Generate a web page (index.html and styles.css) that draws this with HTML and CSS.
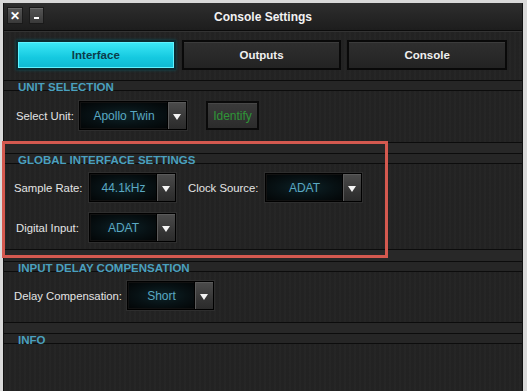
FILE: index.html
```html
<!DOCTYPE html>
<html>
<head>
<meta charset="utf-8">
<link rel="stylesheet" href="styles.css">
</head>
<body>
<div class="window">
  <div class="titlebar">
    <div class="tb-btns">
      <span class="tb-btn close">&#x2715;</span>
      <span class="tb-btn min"><i class="min-bar"></i></span>
    </div>
    <div class="title">Console Settings</div>
  </div>
  <div class="tabs">
    <div class="tab active">Interface</div>
    <div class="tab">Outputs</div>
    <div class="tab">Console</div>
  </div>

  <div class="sec-head">UNIT SELECTION</div>
  <div class="sec-body unit">
    <div class="row">
      <span class="label l-unit">Select Unit:</span>
      <div class="dd w108"><span class="dd-val">Apollo Twin</span><span class="dd-arrow"></span></div>
      <div class="btn-identify">Identify</div>
    </div>
  </div>
  <div class="sec-gap"></div>

  <div class="sec-head">GLOBAL INTERFACE SETTINGS</div>
  <div class="sec-body global">
    <div class="grid">
      <span class="label">Sample Rate:</span>
      <div class="dd w87"><span class="dd-val">44.1kHz</span><span class="dd-arrow"></span></div>
      <span class="label l-clock">Clock Source:</span>
      <div class="dd w97"><span class="dd-val">ADAT</span><span class="dd-arrow"></span></div>
      <span class="label l-dig">Digital Input:</span>
      <div class="dd w87"><span class="dd-val">ADAT</span><span class="dd-arrow"></span></div>
    </div>
  </div>
  <div class="sec-gap wide"></div>

  <div class="sec-head">INPUT DELAY COMPENSATION</div>
  <div class="sec-body delay">
    <div class="row">
      <span class="label l-delay">Delay Compensation:</span>
      <div class="dd w87"><span class="dd-val">Short</span><span class="dd-arrow"></span></div>
    </div>
  </div>
  <div class="sec-gap"></div>

  <div class="sec-head">INFO</div>
  <div class="sec-body info"></div>

  <div class="highlight"></div>
</div>
</body>
</html>
```

FILE: styles.css
```css
* { box-sizing: border-box; }
html, body { margin: 0; padding: 0; }
body {
  background: #d9d9d9;
  width: 527px;
  height: 391px;
  overflow: hidden;
  font-family: "Liberation Sans", Arial, sans-serif;
}
.window {
  position: relative;
  margin: 3px 4px 0 3px;
  height: 388px;
  background: #232323;
  background-image: repeating-linear-gradient(90deg, rgba(255,255,255,0.012) 0 2px, rgba(0,0,0,0.02) 2px 5px);
  border-left: 1px solid #111;
  border-right: 1px solid #111;
}

/* title bar */
.titlebar {
  position: relative;
  height: 28px;
  background: linear-gradient(#2e2e2e, #1d1d1d);
  border-bottom: 1px solid #0b0b0b;
  box-shadow: 0 1px 0 #333;
  display: flex;
  align-items: center;
  justify-content: center;
}
.tb-btns {
  position: absolute;
  left: 3px;
  top: 4px;
  display: flex;
  gap: 6px;
}
.tb-btn {
  width: 16px;
  height: 17px;
  background: linear-gradient(#555, #3a3a3a);
  border: 1px solid #1a1a1a;
  box-shadow: inset 0 1px 0 #6a6a6a;
  color: #fff;
  font-size: 12px;
  font-weight: bold;
  display: flex;
  align-items: center;
  justify-content: center;
  line-height: 1;
}
.tb-btn.min { width: 15px; }
.min-bar {
  display: block;
  width: 5px;
  height: 2px;
  background: #fff;
  margin-top: 5px;
}
.title {
  color: #f2f2f2;
  font-size: 12px;
  font-weight: bold;
  padding-top: 1px;
}

/* tabs */
.tabs {
  display: flex;
  gap: 6px;
  padding: 9px 15px 10px 12px;
}
.tab {
  height: 30px;
  flex: 1;
  display: flex;
  align-items: center;
  justify-content: center;
  font-size: 11.5px;
  font-weight: bold;
  color: #f0f0f0;
  background: linear-gradient(#2f2f2f, #232323);
  border: 2px solid #090909;
  box-shadow: inset 0 1px 0 #3c3c3c;
}
.tab.active {
  color: #0c3d4a;
  background: linear-gradient(#3ee9f7, #15c9e0 60%, #10b8d2);
  border: 2px solid #0d2a30;
  box-shadow: inset 0 0 0 1px #5ff2ff, 0 0 3px #0b4f5a;
}

/* sections */
.sec-head {
  height: 11px;
  border-top: 1px solid #0c0c0c;
  border-bottom: 1px solid #0c0c0c;
  padding-left: 14px;
  color: #4aa0bf;
  font-size: 11.5px;
  font-weight: bold;
  line-height: 12px;
  background: #262626;
  white-space: nowrap;
}
.sec-gap {
  height: 11px;
  border-top: 1px solid #0c0c0c;
  background: #282828;
}
.sec-gap.wide { height: 12px; }
.sec-body { padding-left: 10px; }
.sec-body.unit { padding-top: 10px; height: 51px; }
.sec-body.global { padding-top: 9px; height: 85px; }
.sec-body.delay { padding-top: 9px; height: 50px; }
.sec-body.info { height: 60px; }

.row {
  display: flex;
  align-items: center;
  height: 29px;
}
.label {
  color: #e4e4e4;
  font-size: 11.3px;
  white-space: nowrap;
  flex-shrink: 0;
}
.l-unit { width: 65px; padding-left: 2px; }
.l-delay { width: 113px; }
.grid {
  display: grid;
  grid-template-columns: 75px 87px 89px 97px;
  grid-template-rows: 29px 29px;
  row-gap: 11px;
  align-items: center;
}
.l-clock { padding-left: 12px; }
.l-dig { padding-left: 2px; }

/* dropdown */
.dd {
  height: 29px;
  display: flex;
  flex-shrink: 0;
  border: 1px solid #000;
  box-shadow: 0 0 0 1px #2e2e2e;
  background: #000;
}
.w108 { width: 108px; }
.w87 { width: 87px; }
.w97 { width: 97px; }
.dd-val {
  flex: 1;
  display: flex;
  align-items: center;
  justify-content: center;
  color: #5aa9c3;
  font-size: 12px;
  background: radial-gradient(ellipse at 50% 50%, #0d2328 0%, #071114 55%, #030607 100%);
  border: 1px solid #111;
  border-right: none;
}
.dd-arrow {
  width: 19px;
  position: relative;
  background: linear-gradient(#4c4c4c, #333 70%, #2b2b2b);
  border-left: 1px solid #000;
  box-shadow: inset 1px 1px 0 #5a5a5a;
}
.dd-arrow::after {
  content: "";
  position: absolute;
  left: 5px;
  top: 12px;
  border-left: 4px solid transparent;
  border-right: 4px solid transparent;
  border-top: 6px solid #f4f4f4;
}

/* identify button */
.btn-identify {
  margin-left: 19px;
  width: 53px;
  height: 29px;
  border: 2px solid #0a0a0a;
  background: linear-gradient(#3a3a3a, #2c2c2c);
  box-shadow: inset 0 1px 0 #474747;
  color: #2f9637;
  font-size: 12px;
  display: flex;
  align-items: center;
  justify-content: center;
}

/* annotation overlay */
.highlight {
  position: absolute;
  left: -2px;
  top: 138px;
  width: 386px;
  height: 117px;
  border: 3px solid #d4594f;
  pointer-events: none;
}
```
